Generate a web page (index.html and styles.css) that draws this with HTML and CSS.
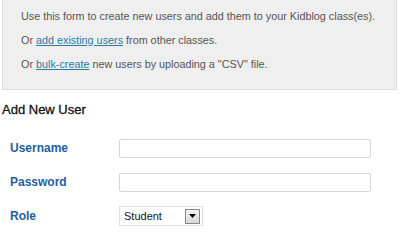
FILE: index.html
```html
<!DOCTYPE html>
<html lang="en">

<head>
  <meta charset="UTF-8">
  <title>Add New User</title>
  <link rel="stylesheet" href="styles.css">
</head>

<body>
  <div class="intro">
    <p>Use this form to create new users and add them to your Kidblog class(es).</p>
    <p>Or <a href="#">add existing users</a> from other classes.</p>
    <p>Or <a href="#">bulk-create</a> new users by uploading a "CSV" file.</p>
  </div>

  <h3>Add New User</h3>

  <div class="form">
    <label for="username">Username</label>
    <input type="text" id="username">
    <label for="password">Password</label>
    <input type="text" id="password">
    <label for="role">Role</label>
    <div class="select" id="role">
      <span>Student</span>
      <span class="arrow"><svg width="7" height="4" viewBox="0 0 7 4"><path d="M0 0h7L3.5 4z" fill="#000"/></svg></span>
    </div>
  </div>
</body>

</html>
```

FILE: styles.css
```css
body {
  margin: 0;
  font-family: "Liberation Sans", Arial, sans-serif;
  background-color: #fff;
}

.intro {
  margin: 0 3px 0 2px;
  padding: 4px 18px 13px;
  background-color: #efefef;
  border: 1px solid #dcdcdc;
  border-top: none;
}

.intro p {
  margin: 0;
  line-height: 24px;
  font-size: 10.8px;
  white-space: nowrap;
  color: #555;
}

.intro a {
  color: #2a7ba6;
}

h3 {
  margin: 10px 0 0 2px;
  line-height: 20px;
  font-size: 13px;
  font-weight: normal;
  color: #111;
  -webkit-text-stroke: 0.3px #111;
}

.form {
  display: grid;
  grid-template-columns: 109px 252px;
  grid-auto-rows: 34px;
  align-items: center;
  margin: 11px 0 0 10px;
}

label {
  font-size: 12px;
  font-weight: bold;
  color: #1d5fa0;
}

input {
  box-sizing: border-box;
  height: 19px;
  margin: 0;
  border: 1px solid #d6d6d6;
  border-radius: 2px;
  background: #fff;
}

.select {
  box-sizing: border-box;
  display: flex;
  align-items: center;
  justify-content: space-between;
  width: 84px;
  height: 20px;
  padding: 0 2px 0 4px;
  border: 1px solid #e0e0e0;
  font-size: 11px;
  color: #111;
}

.arrow {
  box-sizing: border-box;
  display: flex;
  align-items: center;
  justify-content: center;
  width: 15px;
  height: 15px;
  border: 1px solid #888;
  background: linear-gradient(#f4f4f4, #d8d8d8);
}
```
